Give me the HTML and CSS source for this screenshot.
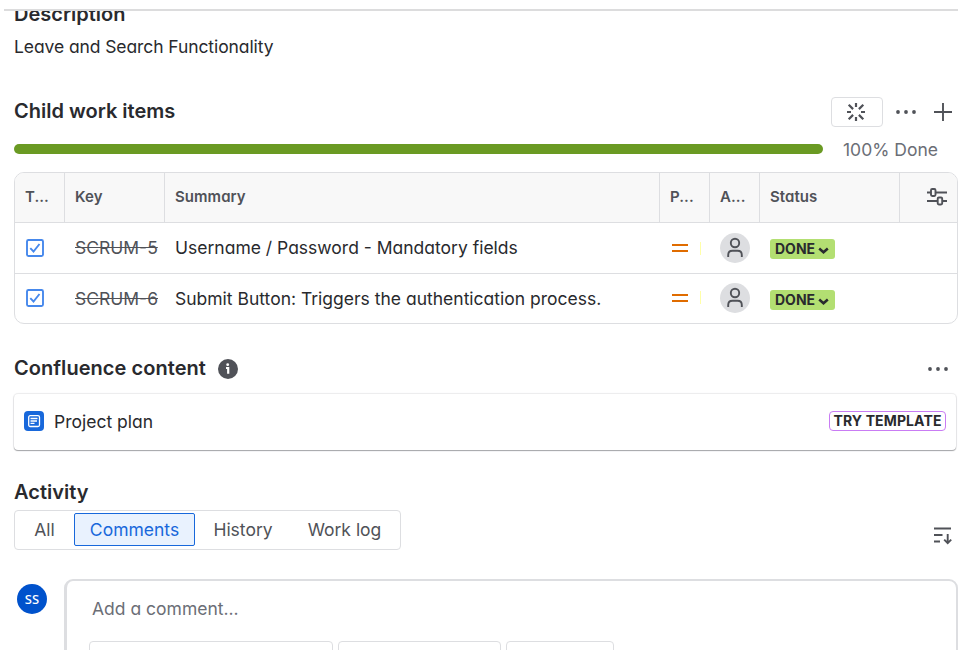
FILE: index.html
```html
<!DOCTYPE html>
<html lang="en">
<head>
<meta charset="utf-8">
<title>Work item</title>
<link rel="stylesheet" href="styles.css">
</head>
<body>
<div class="topbar"></div>
<main class="page">
  <section class="description">
    <h2 class="heading">Description</h2>
    <p class="desc-text">Leave and Search Functionality</p>
  </section>

  <section class="children">
    <header class="section-head child-head">
      <h2 class="heading child-title">Child work items</h2>
      <div class="actions">
        <button class="box-btn" aria-label="Suggest">
          <svg width="20" height="20" viewBox="0 0 20 20" class="ico spark"><path d="M10 1v4M10 15v4M1 10h4M15 10h4M2.700 2.700l4.400 4.400M12.900 12.900l4.400 4.400M17.300 2.700l-4.400 4.400M7.100 12.900l-4.400 4.400"/></svg>
        </button>
        <svg width="22" height="6" viewBox="0 0 22 6" class="dots"><circle cx="3" cy="3" r="1.900"/><circle cx="11" cy="3" r="1.900"/><circle cx="19" cy="3" r="1.900"/></svg>
        <svg width="20" height="20" viewBox="0 0 20 20" class="ico plus"><path d="M10 1v18M1 10h18"/></svg>
      </div>
    </header>
    <div class="progress"><div class="bar"></div><span class="pct">100% Done</span></div>

    <div class="table">
      <div class="row head">
        <div class="cell">T...</div><div class="cell">Key</div><div class="cell">Summary</div><div class="cell">P...</div><div class="cell">A...</div><div class="cell">Status</div>
        <div class="cell settings"><svg width="22" height="20" viewBox="0 0 22 20" class="ico"><path d="M1 5.500h4M10 5.500h11M1 14h10.500M16.500 14h4.500"/><rect x="5" y="2" width="4.500" height="7" rx="1.200"/><rect x="11.700" y="10.500" width="4.500" height="7" rx="1.200"/></svg></div>
      </div>
      <div class="row">
        <div class="cell"><svg width="20" height="20" viewBox="0 0 20 20" class="task"><rect x="2" y="2" width="16" height="16" rx="1.500"/><path d="M5.300 10.200l3.200 3.300 6-7.500"/></svg></div>
        <div class="cell key">SCRUM-5</div>
        <div class="cell summary">Username / Password - Mandatory fields</div>
        <div class="cell prio"><i class="equal"></i><i class="tick"></i></div>
        <div class="cell"><span class="person"><svg width="30" height="30" viewBox="0 0 30 30"><circle cx="15" cy="10" r="4.200"/><path d="M8.200 24v-2c0-2.600 1.800-4.200 4.200-4.200h5.200c2.400 0 4.200 1.600 4.200 4.200v2"/></svg></span></div>
        <div class="cell"><span class="status">DONE<svg width="11" height="7" viewBox="0 0 11 7"><path d="M1.200 1.500l4.300 3.800 4.300-3.800"/></svg></span></div>
        <div class="cell"></div>
      </div>
      <div class="row last">
        <div class="cell icon"><svg width="20" height="20" viewBox="0 0 20 20" class="task"><rect x="2" y="2" width="16" height="16" rx="1.500"/><path d="M5.300 10.200l3.200 3.300 6-7.500"/></svg></div>
        <div class="cell key">SCRUM-6</div>
        <div class="cell summary">Submit Button: Triggers the authentication process.</div>
        <div class="cell prio icon"><i class="equal"></i><i class="tick"></i></div>
        <div class="cell icon"><span class="person"><svg width="30" height="30" viewBox="0 0 30 30"><circle cx="15" cy="10" r="4.200"/><path d="M8.200 24v-2c0-2.600 1.800-4.200 4.200-4.200h5.200c2.400 0 4.200 1.600 4.200 4.200v2"/></svg></span></div>
        <div class="cell"><span class="status">DONE<svg width="11" height="7" viewBox="0 0 11 7"><path d="M1.200 1.500l4.300 3.800 4.300-3.800"/></svg></span></div>
        <div class="cell"></div>
      </div>
    </div>
  </section>

  <section class="confluence">
    <header class="section-head conf-head">
      <h2 class="heading conf-title">Confluence content</h2>
      <svg class="info" width="20" height="20" viewBox="0 0 20 20"><circle cx="10" cy="10" r="10"/><circle class="mark" cx="9.700" cy="5.700" r="1.400"/><path d="M8 9h2.200v5.800"/></svg>
      <svg width="22" height="6" viewBox="0 0 22 6" class="dots more"><circle cx="3" cy="3" r="1.900"/><circle cx="11" cy="3" r="1.900"/><circle cx="19" cy="3" r="1.900"/></svg>
    </header>
    <div class="card">
      <svg width="20" height="20" viewBox="0 0 20 20" class="doc"><rect class="tile" width="20" height="20" rx="4"/><rect class="sheet" x="4.700" y="4.700" width="10.800" height="10.800" rx="1.500"/><path d="M6.500 7.500h7M6.500 10h6.500M6.500 12.300h4"/></svg>
      <span class="plan">Project plan</span>
      <span class="try">TRY TEMPLATE</span>
    </div>
  </section>

  <section class="activity">
    <h2 class="heading act-title">Activity</h2>
    <div class="tabs-row">
      <div class="tabs"><span class="tab all">All</span><span class="tab comments">Comments</span><span class="tab history">History</span><span class="tab worklog">Work log</span></div>
      <svg width="20" height="20" viewBox="0 0 20 20" class="ico sort"><path d="M1 3.500h17M1 10h8.500M1 16.500h6M14.700 9v9M11.200 14.700l3.500 3.500 3.500-3.500"/></svg>
    </div>
    <div class="comment">
      <span class="avatar">SS</span>
      <div class="editor">
        <div class="placeholder">Add a comment...</div>
        <div class="suggestions"><span class="chip c1"></span><span class="chip c2"></span><span class="chip c3"></span></div>
      </div>
    </div>
  </section>
</main>
</body>
</html>
```
FILE: styles.css
```css
* { box-sizing: border-box; }
html, body { height: 650px; overflow: hidden; }
body {
  margin: 0;
  background: #fff;
  color: #292a2e;
  font-family: Inter, "Liberation Sans", sans-serif;
  font-feature-settings: "cv11";
  font-size: 17.5px;
  line-height: 24px;
}
h2, p { margin: 0; }
svg { display: block; flex: none; }
.ico { fill: none; stroke: #505258; stroke-width: 1.9; }
.spark { stroke-width: 2.2; }
.dots { fill: #505258; }
.heading { font-size: 20px; font-weight: 600; line-height: 24px; white-space: nowrap; }

.topbar {
  position: relative;
  z-index: 1;
  height: 11px;
  margin: 0 3px 0 4px;
  background: #fff;
  border-bottom: 2px solid #dcdcdd;
}
.page { padding: 0 3px 0 14px; }
.description { margin-top: -9px; }
.desc-text { margin-top: 9px; letter-spacing: -0.09px; white-space: nowrap; }

.section-head { display: flex; align-items: center; }
.child-head { margin-top: 38px; height: 30px; }
.child-title { margin-bottom: 2px; }
.actions { display: flex; align-items: center; margin-left: auto; }
.box-btn {
  display: flex; align-items: center; justify-content: center;
  width: 52px; height: 30px; padding: 0 2px 0 0; margin-right: 12px;
  border: 1px solid #dddee1; border-radius: 4px; background: #fff;
}
.plus { margin: 0 5px 0 16px; }
.progress { display: flex; align-items: center; height: 24px; margin-top: 10px; }
.bar { width: 809px; height: 10px; border-radius: 5px; background: #6a9a23; }
.pct { margin: 2px 0 0 20px; color: #6b6e76; line-height: 24px; white-space: nowrap; }

.table { margin-top: 11px; border: 1px solid #dddee1; border-radius: 10px; overflow: hidden; height: 152px; }
.row { display: grid; grid-template-columns: 50px 100px 495px 50px 50px 140px 1fr; height: 51px; border-bottom: 1px solid #dddee1; }
.row.last { height: 49px; border-bottom: 0; }
.cell { display: flex; align-items: center; padding-left: 10px; white-space: nowrap; }
.cell.icon { padding-bottom: 2px; }
.head { height: 50px; background: #f8f8f8; color: #505258; font-size: 15px; font-weight: 600; letter-spacing: 0.05px; }
.head .cell { padding-bottom: 2px; border-right: 1px solid #dddee1; }
.head .settings { border-right: 0; padding-left: 26px; }
.task { fill: none; stroke: #4688ec; stroke-width: 1.9; }
.key { color: #505258; text-decoration: line-through; }
.equal { width: 16px; height: 8px; margin-left: 2px; border-top: 2px solid #e06c00; border-bottom: 2px solid #e06c00; }
.tick { width: 1px; height: 13px; margin-left: 12px; background: #ffffa8; }
.person { width: 30px; height: 30px; border-radius: 50%; background: #dddee1; }
.person svg { fill: none; stroke: #505258; stroke-width: 1.9; }
.status {
  display: flex; align-items: center; gap: 3px; width: 65px; height: 20px; margin-top: 2px;
  padding-left: 5px; border-radius: 3px; background: #b3df72; font-size: 14px; font-weight: 650;
}
.status svg { margin-top: 3px; fill: none; stroke: #292a2e; stroke-width: 2.5; }

.conf-head { height: 24px; margin-top: 32px; }
.conf-title { letter-spacing: 0.05px; }
.info { margin: 2px 0 0 12px; fill: #505258; }
.info .mark { fill: #fff; }
.info path { fill: none; stroke: #fff; stroke-width: 2.2; }
.more { margin: 2px 9px 0 auto; }
.card {
  display: flex; align-items: center; height: 56px; margin: 14px 2px 0 0; padding: 0 10px;
  border-radius: 4px; box-shadow: 0 1px 1px #a4a5a8, 0 0 1px 1px #ececed;
}
.doc { margin-bottom: 2px; }
.doc .tile { fill: #1868db; }
.doc .sheet, .doc path { fill: none; stroke: #fff; stroke-width: 1.3; }
.plan { margin-left: 10px; }
.try {
  display: flex; align-items: center; justify-content: center; width: 117px; height: 20px; margin: 0 0 2px auto;
  border: 1px solid #c97cf4; border-radius: 4px; font-size: 14px; font-weight: 650; letter-spacing: 0.12px; white-space: nowrap;
}

.act-title { margin-top: 30px; }
.tabs-row { display: flex; align-items: center; height: 40px; margin-top: 6px; }
.tabs { display: flex; align-items: flex-start; width: 387px; height: 40px; padding-top: 2px; border: 1px solid #dddee1; border-radius: 4px; color: #505258; }
.tab { display: flex; align-items: center; justify-content: center; height: 33px; padding-top: 1px; white-space: nowrap; }
.all { width: 59px; }
.comments { width: 121px; border: 1px solid #1868db; border-radius: 2px; background: #e9f2fe; color: #1868db; }
.history { width: 96px; }
.worklog { width: 107px; }
.sort { margin: 10px 5px 0 auto; }
.comment { display: flex; margin-top: 29px; }
.avatar {
  display: flex; align-items: center; justify-content: center; width: 30px; height: 30px; margin: 5px 17px 0 3px;
  border-radius: 50%; background: #0052cc; color: #fff; font: 500 13px "Noto Sans", sans-serif;
}
.editor { flex: 1; height: 90px; padding: 16px 22px; border: 2px solid #dddee1; border-left-width: 3px; border-radius: 9px; }
.placeholder { margin-left: 3px; color: #6b6e76; }
.suggestions { display: flex; gap: 5px; margin-top: 20px; }
.chip { height: 32px; border: 1px solid #dddee1; border-radius: 4px; }
.c1 { width: 244px; }
.c2 { width: 163px; }
.c3 { width: 108px; }
```
